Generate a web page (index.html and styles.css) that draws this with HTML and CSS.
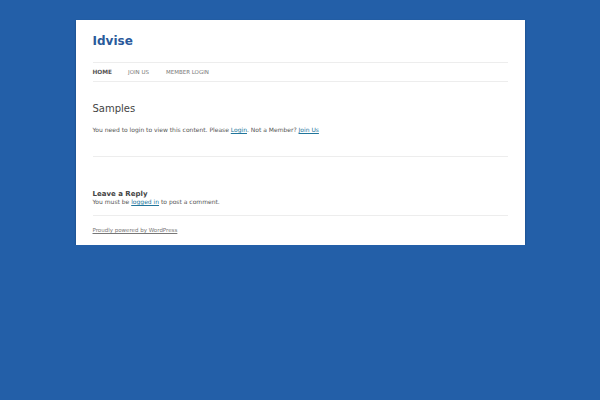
FILE: index.html
```html
<!DOCTYPE html>
<html lang="en">
<head>
  <meta charset="UTF-8" />
  <title>Idvise | Samples</title>
  <link rel="stylesheet" href="styles.css">
</head>
<body>
  <div class="page">
    <header class="site-header">
      <h1 class="site-title"><a href="#">Idvise</a></h1>
      <nav class="main-nav">
        <a href="#" class="current">Home</a>
        <a href="#">Join Us</a>
        <a href="#">Member Login</a>
      </nav>
    </header>

    <article class="entry">
      <h2 class="entry-title">Samples</h2>
      <p>You need to login to view this content. Please <a href="#">Login</a>. Not a Member? <a href="#">Join Us</a></p>
    </article>

    <div class="comments">
      <h3>Leave a Reply</h3>
      <p>You must be <a href="#">logged in</a> to post a comment.</p>
    </div>

    <footer class="site-footer">
      <a href="#">Proudly powered by WordPress</a>
    </footer>
  </div>
</body>
</html>
```

FILE: styles.css
```css
body {
  margin: 0;
  padding: 20px 0 0;
  background-color: #235fa8;
  font-family: "DejaVu Sans", sans-serif;
  color: #444;
}
.page {
  width: 415px;
  margin: 0 auto;
  padding: 0 17px;
  background-color: #fff;
  box-shadow: 0 1px 2px rgba(0,0,0,0.3);
}
.site-header {
  padding-top: 14px;
}
.site-title {
  margin: 0;
  font-size: 12px;
  line-height: 14px;
}
.site-title a {
  color: #2a5a9b;
  text-decoration: none;
}
.main-nav {
  margin-top: 14px;
  border-top: 1px solid #ededed;
  border-bottom: 1px solid #ededed;
  height: 18px;
  display: flex;
  align-items: center;
  gap: 16px;
}
.main-nav a {
  font-size: 5.5px;
  text-transform: uppercase;
  color: #777;
  text-decoration: none;
}
.main-nav a.current {
  font-weight: bold;
  color: #555;
  font-size: 5.8px;
}
.main-nav a:last-child {
  margin-left: 1px;
}
.entry {
  padding: 20px 0 23px;
  border-bottom: 1px solid #ededed;
}
.entry-title {
  margin: 0;
  font-size: 10px;
  font-weight: normal;
  line-height: 14px;
  color: #444;
}
.entry p {
  margin: 10px 0 0;
  font-size: 6px;
  color: #555;
}
a {
  color: #21759b;
  text-decoration-thickness: 0.5px;
}
.comments {
  padding: 33px 0 9px;
  border-bottom: 1px solid #ededed;
}
.comments h3 {
  margin: 0;
  font-size: 7px;
  line-height: 8px;
  color: #444;
}
.comments p {
  margin: 0;
  font-size: 6px;
  line-height: 8px;
  color: #555;
}
.site-footer {
  padding: 11px 0 12px;
  font-size: 5.5px;
}
.site-footer a {
  color: #777;
}
```
